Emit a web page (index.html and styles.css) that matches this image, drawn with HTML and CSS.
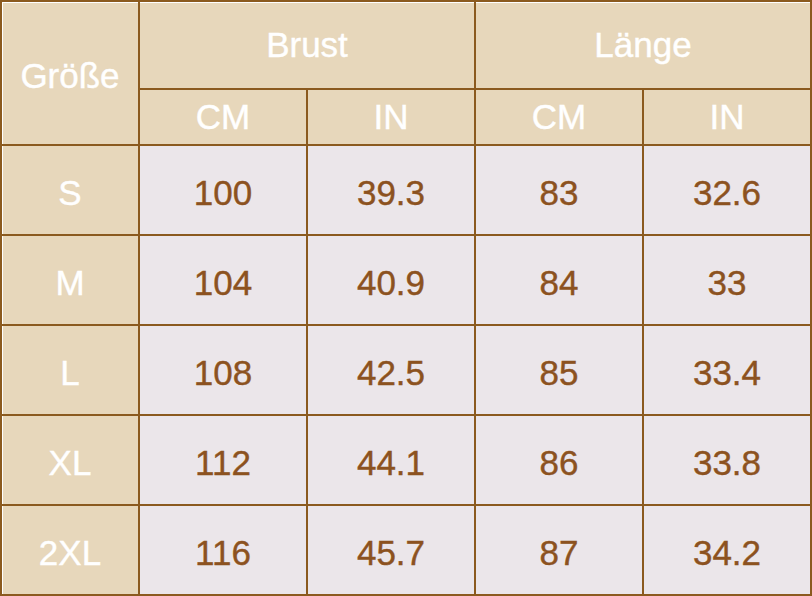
FILE: index.html
```html
<!DOCTYPE html>
<html lang="de">
<head>
<meta charset="utf-8">
<title>Größentabelle</title>
<link rel="stylesheet" href="styles.css">
</head>
<body>
<div class="table">
  <div class="cell head top left span-rows">Größe</div>
  <div class="cell head top span-cols">Brust</div>
  <div class="cell head top span-cols">Länge</div>
  <div class="cell head">CM</div>
  <div class="cell head">IN</div>
  <div class="cell head">CM</div>
  <div class="cell head">IN</div>

  <div class="cell head left body-row">S</div>
  <div class="cell val">100</div><div class="cell val">39.3</div><div class="cell val">83</div><div class="cell val">32.6</div>

  <div class="cell head left body-row">M</div>
  <div class="cell val">104</div><div class="cell val">40.9</div><div class="cell val">84</div><div class="cell val">33</div>

  <div class="cell head left body-row">L</div>
  <div class="cell val">108</div><div class="cell val">42.5</div><div class="cell val">85</div><div class="cell val">33.4</div>

  <div class="cell head left body-row">XL</div>
  <div class="cell val">112</div><div class="cell val">44.1</div><div class="cell val">86</div><div class="cell val">33.8</div>

  <div class="cell head left body-row">2XL</div>
  <div class="cell val">116</div><div class="cell val">45.7</div><div class="cell val">87</div><div class="cell val">34.2</div>
</div>
</body>
</html>
```

FILE: styles.css
```css
html, body {
  margin: 0;
  padding: 0;
  background: #ffffff;
}

.table {
  display: grid;
  grid-template-columns: 136px 166px 166px 166px 166px;
  grid-template-rows: 86px 54px repeat(5, 88px);
  gap: 2px;
  padding: 2px;
  width: 812px;
  height: 596px;
  box-sizing: border-box;
  background: #8b5a1f;
  font-family: "Liberation Sans", Arial, Helvetica, sans-serif;
  font-size: 35px;
}

.cell {
  display: flex;
  align-items: center;
  justify-content: center;
  box-sizing: border-box;
  -webkit-text-stroke: 0.4px currentColor;
}

.head {
  background: #e7d7bb;
  color: #ffffff;
}

.val {
  background: #ebe6ea;
  color: #8c5220;
  padding-top: 6px;
}

.body-row {
  padding-top: 6px;
}

.span-rows {
  grid-row: span 2;
  padding-top: 6px;
}

.top {
  box-shadow: inset 0 1px 0 #ffffff;
}

.left {
  box-shadow: inset 1px 0 0 #ffffff;
}

.top.left {
  box-shadow: inset 1px 1px 0 #ffffff;
}

.span-cols {
  grid-column: span 2;
}
```
